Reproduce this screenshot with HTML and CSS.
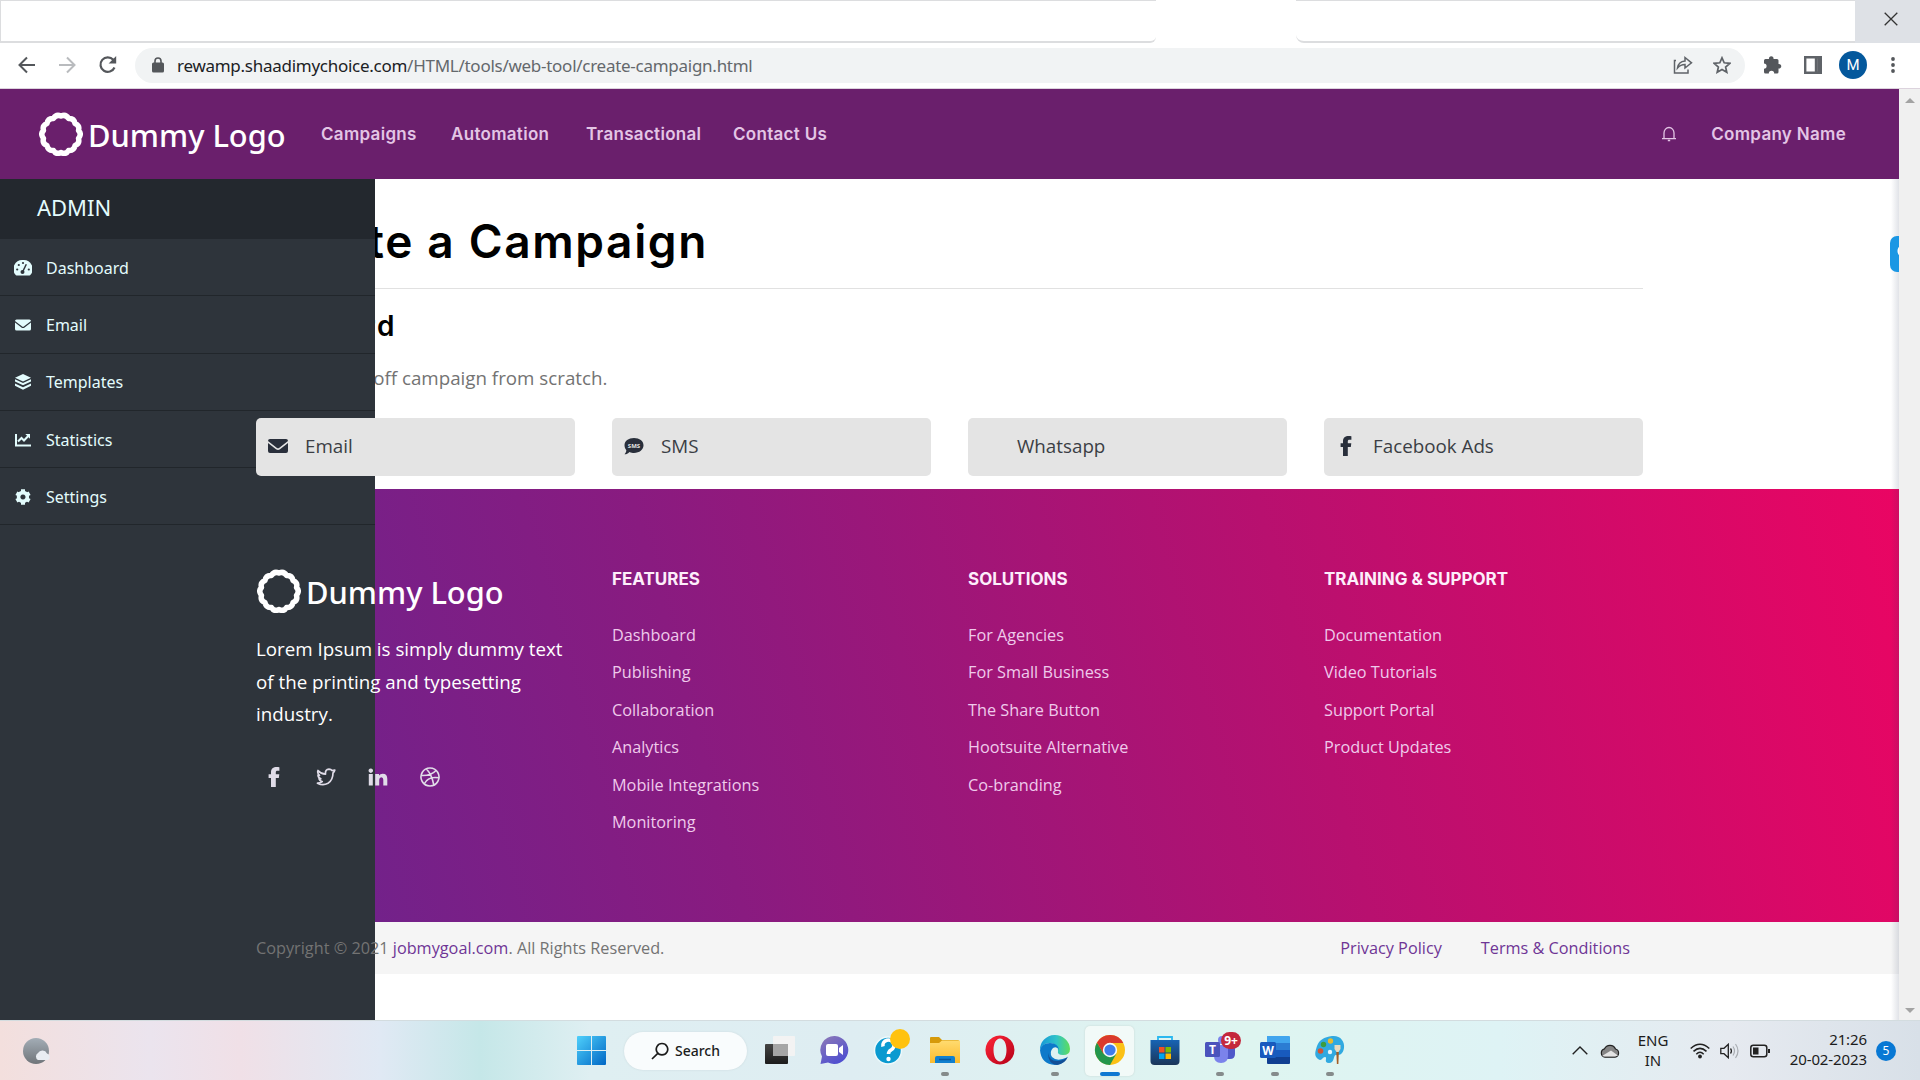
FILE: index.html
```html
<!DOCTYPE html>
<html lang="en">
<head>
<meta charset="utf-8">
<title>Create a Campaign</title>
<link rel="stylesheet" href="styles.css">
</head>
<body>
<svg class="defs" width="0" height="0">
  <defs>
    <path id="ring" fill="none" stroke="currentColor" stroke-width="5.4" stroke-linejoin="round" d="M22 4Q27 2 29.5 6.500Q35 6 36 11.500Q41 13.500 39.500 18.500Q43 22 39.500 26.500Q41 31.500 36 33.500Q35 39 29.500 38.500Q27 43 22 40.500Q17 43 14.500 38.500Q9 39 8 33.500Q3 31.500 4.500 26.500Q1 22 4.500 18.500Q3 13.500 8 11.500Q9 6 14.500 6.500Q17 2 22 4Z"/>
    <path id="fb" d="M11.800 20V11H14.800L15.300 7.300H11.800V5.500C11.800 4.300 12.200 3.700 13.500 3.700H15.400V.3C15 .2 13.900.1 12.800.1 9.200.1 7 1.900 7 5.200V7.300H4.600V11H7V20Z"/>
    <path id="mail" d="M2 3H18Q20 3 20 5L11 12Q10 12.700 9 12L0 5Q0 3 2 3ZM0 7 8 13.200Q10 14.600 12 13.200L20 7V15Q20 17 18 17H2Q0 17 0 15Z"/>
  </defs>
</svg>

<div class="tabs">
  <div class="tab-left"></div>
  <div class="tab-active"></div>
  <div class="tab-right"></div>
  <div class="close"><svg width="14" height="14" viewBox="0 0 14 14"><path d="M.7.7 13.300 13.300M13.300.7.7 13.300" stroke="#333" stroke-width="1.300"/></svg></div>
</div>

<div class="toolbar">
  <svg class="nav-ic" width="18" height="18" viewBox="0 0 18 18"><path d="M17 9H2M9 1.500 1.500 9 9 16.500" fill="none" stroke="#54575b" stroke-width="2"/></svg>
  <svg class="nav-ic" width="18" height="18" viewBox="0 0 18 18"><path d="M1 9H16M9 1.500 16.500 9 9 16.500" fill="none" stroke="#b9bbbe" stroke-width="2"/></svg>
  <svg class="nav-ic reload" width="20" height="20" viewBox="0 0 20 20"><path d="M16.500 12.500A7.300 7.300 0 1 1 15.300 4.800" fill="none" stroke="#54575b" stroke-width="2.200"/><path d="M18.200 1V8.600H10.600Z" fill="#54575b"/></svg>
  <div class="omnibox">
    <svg width="12" height="16" viewBox="0 0 12 16"><path d="M1.500 5.500H10.500Q12 5.500 12 7V14Q12 15.500 10.500 15.500H1.500Q0 15.500 0 14V7Q0 5.500 1.500 5.500Z" fill="#54575b"/><path d="M3 6V4A3 3 0 0 1 9 4V6" fill="none" stroke="#54575b" stroke-width="1.600"/></svg>
    <span class="url"><b>rewamp.shaadimychoice.com</b>/HTML/tools/web-tool/create-campaign.html</span>
    <svg class="share" width="20" height="20" viewBox="0 0 20 20"><path d="M3 5.500H1.500V18H15V14.500M4.500 13Q5.500 6.500 12 6V2.500L18.500 7.800 12 13V9.500Q7.500 9.500 4.500 13Z" fill="none" stroke="#5f6368" stroke-width="1.500"/></svg>
    <svg width="18" height="18" viewBox="0 0 18 18"><path d="M9 1.800 11.200 6.800 16.800 7.300 12.600 11 13.800 16.300 9 13.500 4.200 16.300 5.400 11 1.200 7.300 6.800 6.800Z" fill="none" stroke="#5f6368" stroke-width="1.700"/></svg>
  </div>
  <svg class="t1" width="18" height="18" viewBox="0 0 18 18"><path d="M0 4.500Q0 3 1.500 3H5A2.300 2.300 0 1 1 9.500 3H13Q14.500 3 14.500 4.500V8A2.300 2.300 0 1 1 14.500 12.500V16Q14.500 17.500 13 17.500H10.200A2.500 2.500 0 1 0 4.800 17.500H1.500Q0 17.500 0 16V12.700A2.500 2.500 0 1 0 0 7.500Z" fill="#54575b"/></svg>
  <svg class="t2" width="18" height="18" viewBox="0 0 18 18"><path d="M1.200 1.200H16.800V16.800H1.200ZM12 1V17M14.500 1V17" fill="none" stroke="#5f6368" stroke-width="2.400"/></svg>
  <span class="avatar">M</span>
  <svg class="t3" width="4" height="18" viewBox="0 0 4 18"><g fill="#54575b"><circle cx="2" cy="3" r="1.900"/><circle cx="2" cy="9" r="1.900"/><circle cx="2" cy="15" r="1.900"/></g></svg>
</div>

<div class="viewport">
  <div class="page">
    <header class="site-head">
      <div class="logo"><svg width="44" height="44" viewBox="0 0 44 44"><use href="#ring"/></svg><span>Dummy Logo</span></div>
      <nav><a>Campaigns</a><a>Automation</a><a>Transactional</a><a>Contact Us</a></nav>
      <svg class="bell" width="16" height="16" viewBox="0 0 16 16"><path d="M1 12.700H15M3 12.500V7A5 5.500 0 0 1 13 7V12.500M6.800 14.500H9.200" fill="none" stroke="currentColor" stroke-width="1.300"/></svg>
      <span class="company">Company Name</span>
    </header>
    <div class="stage">
      <aside class="side">
        <h2>ADMIN</h2>
        <a><svg width="18" height="18" viewBox="0 0 18 18"><path fill="currentColor" d="M9 1A9 9 0 0 0 1.500 15.800Q1.800 16.500 2.500 16.500H15.500Q16.200 16.500 16.500 15.800A9 9 0 0 0 9 1Z"/><g fill="#2e343b"><circle cx="9" cy="4" r="1.100"/><circle cx="4.800" cy="6" r="1.100"/><circle cx="3.200" cy="10.500" r="1.100"/><circle cx="14.800" cy="10.500" r="1.100"/><circle cx="8.500" cy="13" r="2"/></g><path d="M8.800 12.500 12.300 5.200" stroke="#2e343b" stroke-width="1.500"/></svg>Dashboard</a>
        <a><svg width="16" height="16" viewBox="0 0 20 20"><use href="#mail" fill="currentColor"/></svg>Email</a>
        <a><svg width="16" height="16" viewBox="0 0 16 16"><path fill="currentColor" d="M8 0 16 3.700 8 7.400 0 3.700ZM0 5.300 8 9 16 5.300V7.400L8 11.200 0 7.400ZM0 9.500 8 13.200 16 9.500V11.700L8 15.800 0 11.700Z"/></svg>Templates</a>
        <a><svg width="16" height="16" viewBox="0 0 16 16"><path d="M1 2V13.500H16M3 9.500 6.500 6 9 8.500 13 4.300" fill="none" stroke="currentColor" stroke-width="2"/><path fill="currentColor" d="M10.300 2H15V6.700Z"/></svg>Statistics</a>
        <a><svg width="16" height="16" viewBox="0 0 16 16"><path fill="none" stroke="currentColor" stroke-width="3.600" d="M8 3.600A4.400 4.400 0 1 1 7.900 3.600Z"/><path stroke="currentColor" stroke-width="4" d="M8 .3V3.200M8 12.800V15.700M1.400 4.200 3.900 5.600M12.100 10.400 14.600 11.800M1.400 11.800 3.900 10.400M12.100 5.600 14.600 4.200"/></svg>Settings</a>
      </aside>
      <main class="content">
        <section class="intro">
          <h1>Create a Campaign</h1>
          <h3>Standard</h3>
          <p>Create a one-off campaign from scratch.</p>
        </section>
        <section class="cards">
          <a><svg width="20" height="20" viewBox="0 0 20 20"><use href="#mail"/></svg><span>Email</span></a>
          <a><svg width="20" height="20" viewBox="0 0 20 20"><path d="M10 2C15.500 2 19.500 5 19.500 9.300S15.500 17 10 17C8.500 17 7 16.800 5.500 16 4 17.500 2 18.500.5 18.300 1.800 17 2.300 15.500 2.300 14.300 1.200 12.800.5 11.200.5 9.300.5 5 4.500 2 10 2Z"/><text x="10" y="11.600" text-anchor="middle" class="sms">SMS</text></svg><span>SMS</span></a>
          <a><i></i><span>Whatsapp</span></a>
          <a><svg width="20" height="20" viewBox="0 0 20 20"><use href="#fb"/></svg><span>Facebook Ads</span></a>
        </section>
        <footer class="foot">
          <div class="about">
            <div class="logo"><svg width="44" height="44" viewBox="0 0 44 44"><use href="#ring"/></svg><span>Dummy Logo</span></div>
            <p>Lorem Ipsum is simply dummy text<br>of the printing and typesetting<br>industry.</p>
            <div class="social">
              <svg width="20" height="20" viewBox="0 0 20 20"><use href="#fb"/></svg>
              <svg width="20" height="20" viewBox="0 0 20 20"><path fill="none" stroke="currentColor" stroke-width="1.700" stroke-linejoin="round" d="M2 3.500Q5 7 9.500 7.200 9 2.500 13 2.200 15 2.200 16 3.600L18.800 3Q18.300 5 17 6 17 13 12 16.300 7 19 1.500 16.200 4.500 16 6.200 14.600 3.500 14 3 11.800H4.800Q2 10.500 2 8L3.500 8.300Q1 6 2 3.500Z"/></svg>
              <svg width="20" height="20" viewBox="0 0 20 20"><path d="M.8 7H4.800V18.500H.8ZM2.800 1.500A2.200 2.200 0 1 1 2.790 1.500ZM7.200 7H11V8.600Q12 6.700 14.800 6.700 19.300 6.700 19.300 12V18.500H15.300V12.700Q15.300 10.200 13.300 10.200T11.200 12.700V18.500H7.200Z"/></svg>
              <svg width="20" height="20" viewBox="0 0 20 20"><path fill="none" stroke="currentColor" stroke-width="1.600" d="M10 1A9 9 0 1 1 9.990 1ZM6.500 2Q12 8 13.800 18M1.200 8.500Q11 9 16 3.500M4.500 16.500Q8 9 19 10.800"/></svg>
            </div>
          </div>
          <div><h4>FEATURES</h4><a>Dashboard</a><a>Publishing</a><a>Collaboration</a><a>Analytics</a><a>Mobile Integrations</a><a>Monitoring</a></div>
          <div><h4>SOLUTIONS</h4><a>For Agencies</a><a>For Small Business</a><a>The Share Button</a><a>Hootsuite Alternative</a><a>Co-branding</a></div>
          <div><h4>TRAINING &amp; SUPPORT</h4><a>Documentation</a><a>Video Tutorials</a><a>Support Portal</a><a>Product Updates</a></div>
        </footer>
        <div class="legal"><span>Copyright © 2021 <a>jobmygoal.com</a>. All Rights Reserved.</span><a class="pp">Privacy Policy</a><a>Terms &amp; Conditions</a></div>
      </main>
      <div class="edge-shade"></div>
      <div class="widget"></div>
    </div>
  </div>
  <div class="scroll"><i class="up"></i><i class="down"></i></div>
</div>

<div class="taskbar">
  <svg class="weather" width="32" height="32" viewBox="0 0 32 32"><defs><linearGradient id="wg" x2="0" y2="1"><stop stop-color="#a3adb6"/><stop offset="1" stop-color="#70757a"/></linearGradient></defs><circle cx="14" cy="16" r="13" fill="url(#wg)"/><path d="M16 25A4 4 0 0 1 16 18A5 5 0 0 1 25 18.500A3.500 3.500 0 0 1 26 25Z" fill="#e9edf2"/></svg>
  <div class="dock">
    <svg class="start" width="29" height="29" viewBox="0 0 29 29"><defs><linearGradient id="win" x2="1" y2="1"><stop stop-color="#4fd0fb"/><stop offset="1" stop-color="#0067c5"/></linearGradient></defs><path fill="url(#win)" d="M1 0H14V14H0V1Q0 0 1 0ZM15 0H28Q29 0 29 1V14H15ZM0 15H14V29H1Q0 29 0 28ZM15 15H29V28Q29 29 28 29H15Z"/></svg>
    <div class="search"><svg width="18" height="18" viewBox="0 0 18 18"><path d="M11 1.500A5.700 5.700 0 1 1 10.990 1.500ZM6.800 11.300 1 17" fill="none" stroke="#1b1b1b" stroke-width="1.700"/></svg><span>Search</span></div>
    <div class="app"><svg width="36" height="36" viewBox="0 0 36 36"><defs><linearGradient id="dk" x2="0" y2="1"><stop stop-color="#444"/><stop offset="1" stop-color="#1c1c1c"/></linearGradient></defs><rect x="3" y="12" width="23" height="20" rx="1" fill="url(#dk)"/><rect x="11" y="4" width="22" height="20" rx="1" fill="#f3f3f3"/><rect x="11" y="12" width="15" height="12" fill="#a5a5a5"/></svg></div>
    <div class="app"><svg width="36" height="36" viewBox="0 0 36 36"><defs><linearGradient id="ch" x2=".6" y2="1"><stop stop-color="#8f7bb6"/><stop offset="1" stop-color="#4f4fd0"/></linearGradient></defs><path d="M18 4A14 14 0 1 1 11 30.500L3.500 32 5 24.500A14 14 0 0 1 18 4Z" fill="url(#ch)"/><rect x="9" y="12" width="12" height="12" rx="2" fill="#fff"/><path d="M22 16 26 13V23L22 20Z" fill="#fff"/></svg></div>
    <div class="app"><svg class="spill" width="36" height="36" viewBox="0 0 36 36"><circle cx="16" cy="18.500" r="13.500" fill="#0b9ad0" stroke="#eef9fb" stroke-width="1.500"/><path d="M11 14.500A5.500 5.300 0 1 1 19 18Q16.500 19.500 16.500 22" fill="none" stroke="#fff" stroke-width="3.600"/><circle cx="16.500" cy="27" r="2.200" fill="#fff"/><circle cx="28" cy="7" r="10" fill="#ffc20e"/></svg></div>
    <div class="app run"><svg width="36" height="36" viewBox="0 0 36 36"><defs><linearGradient id="fo" x2="0" y2="1"><stop stop-color="#ffdb70"/><stop offset="1" stop-color="#fcbb2c"/></linearGradient></defs><path d="M3 6Q3 5 4 5H12L15 8H31Q32 8 32 9V20H3Z" fill="#d69a0a"/><path d="M3 11H12L15 8.500H33V31H3Z" fill="url(#fo)"/><path d="M8 31V26Q8 24 10 24H26Q28 24 28 26V31Z" fill="#1180cf"/><path d="M12 27.500H24" stroke="#0a579b" stroke-width="1.500"/></svg></div>
    <div class="app"><svg width="36" height="36" viewBox="0 0 36 36"><defs><linearGradient id="op" x2="1" y2="1"><stop stop-color="#ff2638"/><stop offset="1" stop-color="#b40018"/></linearGradient></defs><path fill="url(#op)" fill-rule="evenodd" d="M18 3.500A14.500 14.500 0 1 1 17.900 3.500ZM18 6.500C14 6.500 11.500 11.500 11.500 18S14 29.500 18 29.500 24.500 24.500 24.500 18 22 6.500 18 6.500Z"/></svg></div>
    <div class="app run"><svg width="36" height="36" viewBox="0 0 36 36"><defs><linearGradient id="e1" x2="1"><stop stop-color="#1797d8"/><stop offset=".55" stop-color="#2fc3c8"/><stop offset="1" stop-color="#5fdd5b"/></linearGradient></defs><path d="M3 18A15 14.500 0 0 1 33 17Q33 23 26 23 20 23 21 19 21 11 12 11 5 12 3 18Z" fill="url(#e1)"/><path d="M3 18Q5 11 13 11 21 11 22 18 20 14 16 16 12 20 15 25 20 30 30 25.500 26 33 18 33 4 32 3 18Z" fill="#0d79ca"/><path d="M11 21Q13 30 21 29 27 28.500 31 24.500 28 32 20 33 11 32 11 21Z" fill="#124f96"/></svg></div>
    <div class="app run current"><svg width="36" height="36" viewBox="0 0 36 36"><circle cx="18" cy="18" r="15" fill="#fbc116"/><path d="M5 10.500A15 15 0 0 0 18 33L24.500 21.500 11.500 21.500Z" fill="#23964c"/><path d="M18 11H31.300A15 15 0 0 0 5 10.500L11.500 21.700Z" fill="#da3a2d"/><circle cx="18" cy="18" r="7.200" fill="#f7fbf7"/><circle cx="18" cy="18" r="5.600" fill="#3f7cec"/></svg></div>
    <div class="app"><svg width="36" height="36" viewBox="0 0 36 36"><defs><linearGradient id="st" x2="0" y2="1"><stop stop-color="#1764b4"/><stop offset="1" stop-color="#1b3558"/></linearGradient></defs><path d="M11 9V5H25V9" fill="none" stroke="#2ab8ef" stroke-width="1.800"/><path d="M3.500 8H32.500V29Q32.500 33 28.500 33H7.500Q3.500 33 3.500 29Z" fill="url(#st)"/><path fill="#f25022" d="M12 15H17.500V20.500H12Z"/><path fill="#7fba00" d="M18.500 15H24V20.500H18.500Z"/><path fill="#00a4ef" d="M12 21.500H17.500V27H12Z"/><path fill="#ffb900" d="M18.500 21.500H24V27H18.500Z"/></svg></div>
    <div class="app run"><svg width="36" height="36" viewBox="0 0 36 36"><circle cx="20" cy="8" r="4" fill="#7b83eb"/><path d="M23 14H33V22Q33 27 28 27H23Z" fill="#5059c9"/><path d="M12 13H26V24Q26 31 19 31T12 24Z" fill="#7b83eb"/><rect x="3" y="10" width="15" height="15" rx="1.500" fill="#4b53bc"/><text x="10.500" y="22" text-anchor="middle" class="glyph">T</text></svg><b class="count">9+</b></div>
    <div class="app run"><svg width="36" height="36" viewBox="0 0 36 36"><path fill="#41a5ee" d="M10 4H32Q33 4 33 5V11H10Z"/><path fill="#2b7cd3" d="M10 11H33V18H10Z"/><path fill="#185abd" d="M10 18H33V25H10Z"/><path fill="#103f91" d="M10 25H33V31Q33 32 32 32H11Q10 32 10 31Z"/><rect x="3" y="10" width="16" height="16" rx="1.500" fill="#185abd"/><text x="11" y="22.500" text-anchor="middle" class="glyph">W</text></svg></div>
    <div class="app run"><svg width="36" height="36" viewBox="0 0 36 36"><path d="M20 4C28 3 33 9 32 16S27 23 24 23 23 31 17 31 16 25 13 25 10 30 6 27 3 20 5 14 12 5 20 4Z" fill="#31a9e0"/><circle cx="8.500" cy="19" r="2.800" fill="#d35534"/><circle cx="11.500" cy="12.500" r="2.700" fill="#3b9c40"/><circle cx="18.500" cy="9" r="2.700" fill="#e8bb31"/><circle cx="18" cy="20" r="2.200" fill="#e8f7fb"/><path d="M22.500 13H28.500V17L26.500 20H24.500L22.500 17Z" fill="#e9d9bd"/><path d="M24.300 20H26.800L26.400 32H24.900Z" fill="#a35d25"/></svg></div>
  </div>
  <div class="tray">
    <svg class="chev" width="16" height="9" viewBox="0 0 16 9"><path d="M.7 8.300 8 1 15.300 8.300" fill="none" stroke="#222" stroke-width="1.400"/></svg>
    <svg class="cloud" width="20" height="14" viewBox="0 0 20 14"><path d="M5 13.200A4.300 4.300 0 0 1 4.500 4.800A6 6 0 0 1 15.500 5A4.200 4.200 0 0 1 15 13.200Z" fill="#858585" stroke="#222" stroke-width="1.200"/><path d="M2 12 11 6.500 18 11.500 15 12.600H4Z" fill="#e4e4e4"/></svg>
    <div class="lang">ENG<br>IN</div>
    <svg class="wifi" width="20" height="16" viewBox="0 0 20 16"><path d="M.7 5.500Q10-3 19.300 5.500M3.500 8.400Q10 2.300 16.500 8.400M6.300 11.200Q10 7.500 13.700 11.200" fill="none" stroke="#222" stroke-width="1.500"/><circle cx="10" cy="13.500" r="1.900" fill="#222"/></svg>
    <svg class="vol" width="20" height="16" viewBox="0 0 20 16"><path d="M.8 5.300H4L8.300 1.300V14.700L4 10.700H.8ZM10.500 5.500Q12.300 8 10.500 10.500" fill="none" stroke="#222" stroke-width="1.300"/><path d="M13 3.500Q16 8 13 12.500M15.500 1Q20.500 8 15.500 15" fill="none" stroke="#a9adb2" stroke-width="1.200"/></svg>
    <svg class="bat" width="20" height="14" viewBox="0 0 20 14"><rect x=".8" y="1.300" width="16" height="11.400" rx="2.500" fill="none" stroke="#222" stroke-width="1.500"/><path d="M3 3.500H8.500V10.500H3ZM18 5H20V9H18Z" fill="#222"/></svg>
    <div class="clock">21:26<br>20-02-2023</div>
    <b class="note">5</b>
  </div>
</div>
</body>
</html>
```
FILE: styles.css
```css
* { box-sizing: border-box; }
body { margin: 0; width: 1920px; height: 1080px; overflow: hidden; background: #fff; font-family: "Open Sans", sans-serif; display: flex; flex-direction: column; }
h1, h2, h3, h4, p { margin: 0; }
svg { display: block; flex: none; }
.defs { position: absolute; }

/* browser chrome */
.tabs { display: flex; height: 43px; flex: none; }
.tab-left { width: 1156px; border: 1px solid #dcdddf; border-bottom-width: 2px; border-right: 0; border-bottom-right-radius: 6px; }
.tab-active { width: 140px; }
.tab-right { width: 559px; border-top: 1px solid #dcdddf; border-bottom: 2px solid #dcdddf; border-bottom-left-radius: 8px; }
.close { width: 65px; background: #dee1e6; display: flex; align-items: center; justify-content: center; padding: 0 0 6px 6px; }
.toolbar { height: 46px; flex: none; display: flex; align-items: center; padding: 0 0 1px 18px; border-bottom: 1px solid #dcd3dd; }
.nav-ic { margin-right: 22px; }
.reload { margin-right: 17px; }
.omnibox { width: 1610px; height: 35px; border-radius: 18px; background: #f1f3f4; display: flex; align-items: center; padding: 0 14px 0 17px; }
.url { font: 17px/35px "Noto Sans", sans-serif; margin-left: 13px; color: #64686c; flex: 1; letter-spacing: -.27px; }
.url b { font-weight: 400; color: #202124; }
.share { margin-right: 20px; }
.t1 { margin-left: 19px; }
.t2 { margin-left: 22px; }
.avatar { margin-left: 17px; width: 28px; height: 28px; border-radius: 50%; background: #04589c; color: #fff; font: 15px/28px Roboto, sans-serif; text-align: center; }
.t3 { margin-left: 24px; }

.viewport { display: flex; height: 931px; flex: none; }
.page { width: 1899px; }
.scroll { width: 21px; background: #f0f0f0; display: flex; flex-direction: column; justify-content: space-between; align-items: center; padding: 9px 0 7px; }
.scroll i { border: 5px solid transparent; }
.scroll .up { border-top: 0; border-bottom-color: #a3a3a3; }
.scroll .down { border-bottom: 0; border-top-color: #a3a3a3; }

/* site header */
.site-head { height: 90px; background: #6a1f6c; display: flex; align-items: center; padding-left: 39px; color: #e3c5e5; font: 600 17px Inter, sans-serif; letter-spacing: .3px; }
.logo { display: flex; align-items: center; height: 44px; color: #fff; width: 248px; letter-spacing: 0; }
.logo span { font: 500 30.800px/44px "Noto Sans", sans-serif; margin-left: 5px; padding-top: 2px; white-space: nowrap; }
nav { display: grid; grid-template-columns: 130px 135px 147px auto; margin-left: 34px; }
.bell { margin-left: auto; }
.company { margin: 0 53px 0 34px; }

/* overlapping sidebar and content */
.stage { display: grid; grid-template-columns: 1899px; height: 841px; overflow: hidden; }
.side { grid-area: 1 / 1; width: 375px; background: #2e343b; z-index: 1; color: #e3fcfd; font: 16px "Noto Sans", sans-serif; }
.side h2 { height: 60px; background: #23282e; font: 22px/57px "Noto Sans", sans-serif; padding-left: 37px; }
.side a { display: flex; align-items: center; height: 57.300px; border-bottom: 1px solid #21262b; padding: 1px 0 0 14px; }
.side svg { margin-right: 14px; width: 18px; }
.content { grid-area: 1 / 1; }
.intro { padding: 34px 256px 0; color: #000; height: 239px; }
.intro h1 { font: 600 46px/56px Inter, sans-serif; letter-spacing: 1.650px; height: 76px; border-bottom: 1px solid #e1e1e1; }
.intro h3 { font: 600 28px/34px Inter, sans-serif; letter-spacing: 2.200px; margin-top: 20px; }
.intro p { font-size: 18.750px; line-height: 30px; color: #737373; margin-top: 20px; }
.cards { display: grid; grid-template-columns: repeat(4, 319px); gap: 37px; padding: 0 256px; position: relative; z-index: 2; height: 71px; }
.cards a { height: 58px; border-radius: 5px; background: #e4e4e4; display: flex; align-items: center; padding: 0 0 2px 12px; color: #3b3e44; font-size: 18.800px; }
.cards svg, .cards i { width: 20px; fill: #292f3b; margin-right: 17px; }
.sms { font: 700 6px "Noto Sans", sans-serif; fill: #e4e4e4; }
.foot { height: 433px; background: linear-gradient(75deg, #5c2894 0%, #891b80 37%, #b8106f 68%, #ea0563 100%); padding: 80px 256px 0; display: grid; grid-template-columns: repeat(4, 319px); gap: 37px; }
.foot > div { position: relative; z-index: 2; }
.foot h4 { font: 700 17px/20px Inter, sans-serif; color: #fdeefb; margin-bottom: 28px; }
.foot > div > a { display: block; font-size: 16.250px; line-height: 37.400px; color: #efcaeb; }
.foot .logo { margin-left: 1px; }
.about p { color: #fff; font-size: 18.750px; line-height: 32.500px; margin-top: 20px; white-space: nowrap; }
.social { display: flex; gap: 32px; margin: 36px 0 0 8px; color: #e0dce8; }
.social svg { fill: currentColor; }
.legal { height: 52px; background: #f5f5f5; padding: 0 269px 0 256px; display: flex; align-items: center; color: #737373; font-size: 16.250px; }
.legal span { position: relative; z-index: 2; margin-right: auto; }
.legal a { color: #6f3595; }
.legal .pp { margin-right: 39px; }
.edge-shade { grid-area: 1 / 1; justify-self: end; width: 8px; background: linear-gradient(90deg, transparent, rgba(40, 55, 90, .14)); }
.widget { grid-area: 1 / 1; justify-self: end; width: 9px; height: 36px; margin-top: 57px; border-radius: 7px 0 0 7px; background: radial-gradient(circle at 14px 15px, #fff 6px, #1b97e4 7px); }

/* taskbar */
.taskbar { height: 60px; flex: none; border-top: 1px solid #d3dcdf; display: flex; align-items: center; background: linear-gradient(90deg, #f3dfdd 0, #ebe4ee 150px, #f0e0e7 240px, #e0e9f4 380px, #c5e7e8 480px, #dfeff2 590px, #deedf2 850px, #def5f0 1250px, #def3f5 1500px, #e6eaf0 1730px, #d8e0e8 1920px); }
.weather { margin-left: 22px; }
.dock { display: flex; align-items: center; height: 60px; margin-left: 523px; }
.search { width: 123px; height: 38px; border-radius: 19px; background: #f9fcfd; box-shadow: 0 0 2px #c8d6db; margin: 0 5px 0 18px; display: flex; align-items: center; justify-content: center; gap: 6px; font: 500 14px "Noto Sans", sans-serif; color: #1b1b1b; }
.app { width: 55px; height: 50px; display: flex; flex-direction: column; align-items: center; padding-top: 6px; position: relative; }
.spill { overflow: visible; }
.run::after { content: ""; width: 8px; height: 4px; border-radius: 2px; background: #858b8b; margin-top: 4px; }
.current { width: 49px; margin: 0 3px; background: #f2faf8; border-radius: 5px; box-shadow: 0 0 2px #c5d4d0; }
.current::after { width: 20px; background: #0f78d2; }
.glyph { font: 700 12px "Noto Sans", sans-serif; fill: #fff; }
.count { position: absolute; left: 29px; top: 6px; min-width: 20px; height: 17px; border-radius: 9px; background: #c4273c; color: #fff; font: 700 12px/17px "Noto Sans", sans-serif; text-align: center; }
.tray { display: flex; align-items: center; margin-left: auto; padding-right: 24px; color: #1c1c1c; font: 15px/20px "Noto Sans", sans-serif; }
.cloud { margin-left: 12px; }
.lang { width: 34px; margin: -2px 20px 0 16px; text-align: center; }
.vol, .bat { margin-left: 10px; }
.clock { margin: -3px 0 0 10px; width: 87px; text-align: right; white-space: nowrap; letter-spacing: -.1px; }
.note { margin-left: 9px; width: 20px; height: 20px; border-radius: 50%; background: #0878d4; color: #fff; font: 12px/20px "Noto Sans", sans-serif; text-align: center; }
```
